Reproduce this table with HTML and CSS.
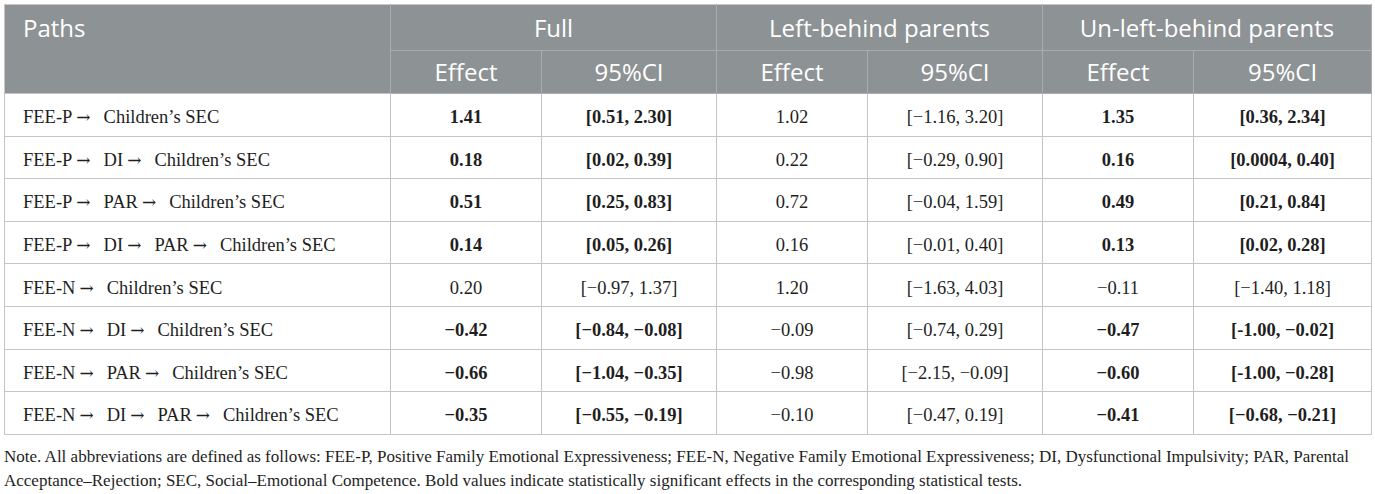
FILE: index.html
```html
<!DOCTYPE html>
<html lang="en">
<head>
<meta charset="utf-8">
<link rel="stylesheet" href="styles.css">
</head>
<body>
<div class="wrap">
<table class="tbl">
  <colgroup>
    <col class="c-path"><col class="c-eff"><col class="c-ci"><col class="c-eff"><col class="c-ci"><col class="c-eff"><col class="c-ci2">
  </colgroup>
  <thead>
    <tr class="h1">
      <th rowspan="2" class="paths">Paths</th>
      <th colspan="2">Full</th>
      <th colspan="2">Left-behind parents</th>
      <th colspan="2">Un-left-behind parents</th>
    </tr>
    <tr class="h2">
      <th>Effect</th><th>95%CI</th><th>Effect</th><th>95%CI</th><th>Effect</th><th>95%CI</th>
    </tr>
  </thead>
  <tbody>
    <tr><td class="path">FEE-P<span class="ar">→</span>Children’s SEC</td><td class="b">1.41</td><td class="b">[0.51, 2.30]</td><td>1.02</td><td>[−1.16, 3.20]</td><td class="b">1.35</td><td class="b">[0.36, 2.34]</td></tr>
    <tr><td class="path">FEE-P<span class="ar">→</span>DI<span class="ar">→</span>Children’s SEC</td><td class="b">0.18</td><td class="b">[0.02, 0.39]</td><td>0.22</td><td>[−0.29, 0.90]</td><td class="b">0.16</td><td class="b">[0.0004, 0.40]</td></tr>
    <tr><td class="path">FEE-P<span class="ar">→</span>PAR<span class="ar">→</span>Children’s SEC</td><td class="b">0.51</td><td class="b">[0.25, 0.83]</td><td>0.72</td><td>[−0.04, 1.59]</td><td class="b">0.49</td><td class="b">[0.21, 0.84]</td></tr>
    <tr><td class="path">FEE-P<span class="ar">→</span>DI<span class="ar">→</span>PAR<span class="ar">→</span>Children’s SEC</td><td class="b">0.14</td><td class="b">[0.05, 0.26]</td><td>0.16</td><td>[−0.01, 0.40]</td><td class="b">0.13</td><td class="b">[0.02, 0.28]</td></tr>
    <tr><td class="path">FEE-N<span class="ar">→</span>Children’s SEC</td><td>0.20</td><td>[−0.97, 1.37]</td><td>1.20</td><td>[−1.63, 4.03]</td><td>−0.11</td><td>[−1.40, 1.18]</td></tr>
    <tr><td class="path">FEE-N<span class="ar">→</span>DI<span class="ar">→</span>Children’s SEC</td><td class="b">−0.42</td><td class="b">[−0.84, −0.08]</td><td>−0.09</td><td>[−0.74, 0.29]</td><td class="b">−0.47</td><td class="b">[-1.00, −0.02]</td></tr>
    <tr><td class="path">FEE-N<span class="ar">→</span>PAR<span class="ar">→</span>Children’s SEC</td><td class="b">−0.66</td><td class="b">[−1.04, −0.35]</td><td>−0.98</td><td>[−2.15, −0.09]</td><td class="b">−0.60</td><td class="b">[-1.00, −0.28]</td></tr>
    <tr><td class="path">FEE-N<span class="ar">→</span>DI<span class="ar">→</span>PAR<span class="ar">→</span>Children’s SEC</td><td class="b">−0.35</td><td class="b">[−0.55, −0.19]</td><td>−0.10</td><td>[−0.47, 0.19]</td><td class="b">−0.41</td><td class="b">[−0.68, −0.21]</td></tr>
  </tbody>
</table>
<p class="note">Note. All abbreviations are defined as follows: FEE-P, Positive Family Emotional Expressiveness; FEE-N, Negative Family Emotional Expressiveness; DI, Dysfunctional Impulsivity; PAR, Parental Acceptance–Rejection; SEC, Social–Emotional Competence. Bold values indicate statistically significant effects in the corresponding statistical tests.</p>
</div>
</body>
</html>
```
FILE: styles.css
```css
html, body {
  margin: 0;
  padding: 0;
  background: #ffffff;
}
.wrap {
  padding: 4px 4px 0 4px;
}
.tbl {
  border-collapse: collapse;
  table-layout: fixed;
  width: 1367px;
  font-family: "Liberation Serif", "Times New Roman", serif;
  font-size: 18.5px;
  color: #1e1e1e;
}
.c-path { width: 386px; }
.c-eff { width: 151px; }
.c-ci { width: 175px; }
.c-ci2 { width: 178px; }
.tbl thead th {
  background: #8d9294;
  color: #ffffff;
  font-family: "Open Sans", "Noto Sans", sans-serif;
  font-weight: 400;
  font-size: 24px;
  line-height: 32px;
  text-align: center;
  border: 1px solid #a9adaf;
  padding: 0 8px;
}
.tbl thead tr.h1 th {
  height: 45px;
  vertical-align: middle;
  border-top-color: #c9c9c9;
}
.tbl thead tr.h2 th {
  height: 42px;
}
.tbl thead tr.h1 th.paths {
  text-align: left;
  vertical-align: top;
  padding: 7px 18px 0;
  border-bottom-color: #c4c4c4;
  border-left-color: #c4c4c4;
}
.tbl tbody td {
  border: 1px solid #c4c4c4;
  height: 36.6px;
  line-height: 22px;
  padding: 5px 10px 0;
  text-align: center;
  vertical-align: middle;
  white-space: nowrap;
}
.tbl tbody td.path {
  text-align: left;
  padding-left: 18px;
}
.tbl tbody td.b {
  font-weight: 700;
}
.ar {
  font-family: "DejaVu Serif", serif;
  font-size: 17px;
  line-height: 1;
  margin: 0 13px 0 4px;
}
.note {
  margin: 10px 0 0 0;
  font-family: "Liberation Serif", "Times New Roman", serif;
  font-size: 17px;
  line-height: 24px;
  color: #1e1e1e;
  width: 1368px;
}
```
